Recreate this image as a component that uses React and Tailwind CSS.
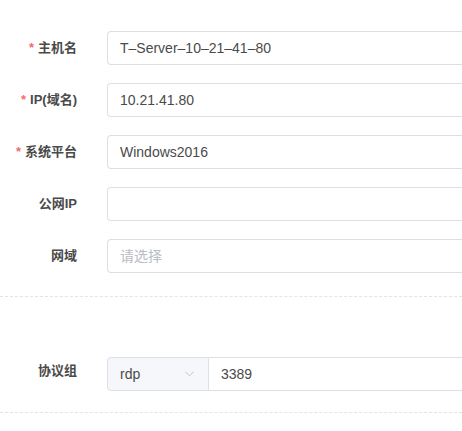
import React from "react";

const font = { fontFamily: '"Helvetica Neue", "Liberation Sans", "Noto Sans CJK SC", sans-serif' };

function Label({ req, children, className = "" }) {
  return (
    <div className={`w-[77px] shrink-0 text-right text-[13px] font-semibold text-[#4a4a4a] whitespace-nowrap ${className}`}>
      {req && <span className="text-[#f56c6c] mr-[4px]">*</span>}
      {children}
    </div>
  );
}

function Row({ req, label, value, placeholder }) {
  return (
    <div className="flex items-center h-[34px]">
      <Label req={req}>{label}</Label>
      <div className="ml-[30px] flex-1 h-[34px] border border-[#dcdfe6] rounded-l-[4px] border-r-0 flex items-center pl-[12px] text-[14px] text-[#4a4a4a] whitespace-nowrap">
        {value ? value : <span className="text-[#b8bcc4]">{placeholder}</span>}
      </div>
    </div>
  );
}

export default function App() {
  return (
    <div className="w-[462px] h-[431px] bg-white overflow-hidden" style={font}>
      <div className="pt-[31px] flex flex-col gap-[18px]">
        <Row req label="主机名" value="T–Server–10–21–41–80" />
        <Row req label="IP(域名)" value="10.21.41.80" />
        <Row req label="系统平台" value="Windows2016" />
        <Row label="公网IP" value="" />
        <Row label="网域" placeholder="请选择" />
      </div>
      <div className="mt-[23px] border-t border-dashed border-[#e4e4e4]" />
      <div className="mt-[60px] flex items-start h-[34px]">
        <Label className="mt-[4px]">协议组</Label>
        <div className="ml-[30px] flex-1 flex h-[34px]">
          <div className="w-[102px] shrink-0 bg-[#f5f7fa] border border-[#dcdfe6] rounded-l-[4px] flex items-center justify-between pl-[12px] pr-[14px] text-[14px] text-[#4a4a4a]">
            <span>rdp</span>
            <svg width="9" height="6" viewBox="0 0 9 6" fill="none">
              <path d="M0.5 0.8 L4.5 4.8 L8.5 0.8" stroke="#c0c4cc" strokeWidth="1" />
            </svg>
          </div>
          <div className="flex-1 border-y border-[#dcdfe6] flex items-center pl-[12px] text-[14px] text-[#4a4a4a]">
            3389
          </div>
        </div>
      </div>
      <div className="mt-[21px] border-t border-dashed border-[#e4e4e4]" />
    </div>
  );
}
